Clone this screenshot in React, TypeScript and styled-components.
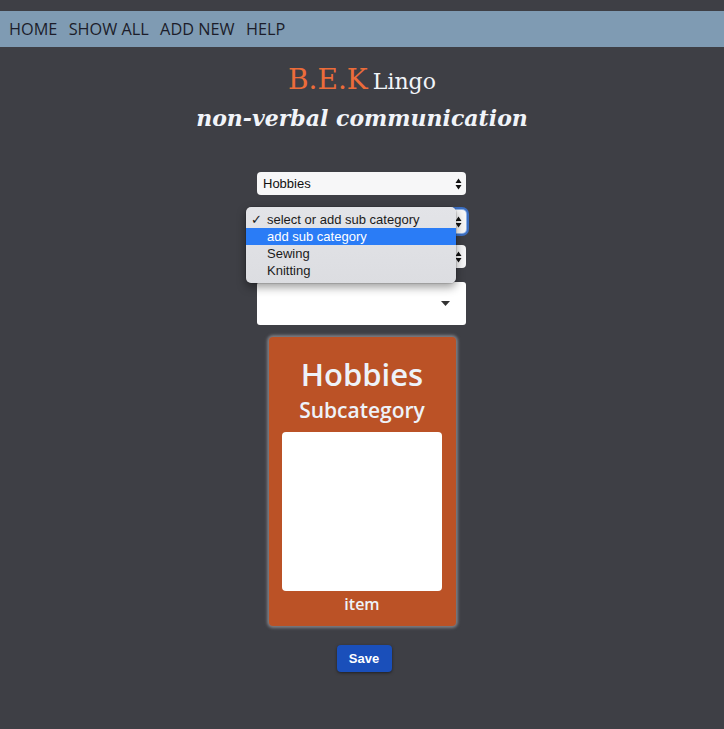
import styled, { createGlobalStyle } from "styled-components";

const GlobalStyle = createGlobalStyle`
  html, body {
    margin: 0;
    padding: 0;
    background: #3e3f45;
  }
  body {
    font-family: "Open Sans", "Liberation Sans", sans-serif;
  }
`;

const Page = styled.div`
  min-height: 729px;
  padding-top: 11px;
  box-sizing: border-box;
`;

const NavBar = styled.nav`
  height: 36px;
  background: #7f9bb3;
  display: flex;
  align-items: center;
  gap: 11.3px;
  padding-left: 9px;
`;

const NavLink = styled.a`
  font-family: "Open Sans", sans-serif;
  font-size: 16.3px;
  color: #1c1d2a;
  text-decoration: none;
`;

const Header = styled.header`
  text-align: center;
  margin-top: 13px;
`;

const Title = styled.h1`
  margin: 0;
  font-family: "DejaVu Serif", "Liberation Serif", serif;
  font-weight: normal;
  line-height: 36px;
  color: #f1f4f9;
`;

const Brand = styled.span`
  font-size: 28px;
  color: #ec6c3a;
  margin-right: 5px;
`;

const Lingo = styled.span`
  font-size: 22px;
`;

const Subtitle = styled.h2`
  margin: 3px 0 0;
  font-family: "DejaVu Serif", "Liberation Serif", serif;
  font-style: italic;
  font-weight: bold;
  font-size: 22px;
  line-height: 30px;
  color: #f1f4f9;
`;

const Form = styled.div`
  width: 209px;
  margin: 39px 0 0 calc(50% - 105px);
  display: flex;
  flex-direction: column;
`;

const Select = styled.div<{ $gap: number; $focused?: boolean }>`
  position: relative;
  height: 23px;
  margin-top: ${(p) => p.$gap}px;
  background: #f7f7f8;
  border-radius: 4px;
  display: flex;
  align-items: center;
  justify-content: space-between;
  padding: 0 4px 0 6px;
  box-sizing: border-box;
  font-family: "Liberation Sans", Arial, sans-serif;
  font-size: 13px;
  color: #111;
  box-shadow: ${(p) =>
    p.$focused ? "0 0 0 1px #8fb2e6, 0 0 0 3px #3c6fc2" : "none"};
`;

const Menu = styled.ul`
  position: absolute;
  left: -11px;
  top: -3px;
  width: 210px;
  margin: 0;
  padding: 4px 0;
  list-style: none;
  background: linear-gradient(#e3e4e8, #dcdde1);
  border-radius: 5px;
  box-shadow: 0 4px 10px rgba(0, 0, 0, 0.4), 0 0 0 0.5px rgba(0, 0, 0, 0.2);
  z-index: 2;
`;

const MenuItem = styled.li<{ $active?: boolean }>`
  position: relative;
  height: 17px;
  line-height: 17px;
  padding-left: 21px;
  font-family: "Liberation Sans", Arial, sans-serif;
  font-size: 13px;
  color: ${(p) => (p.$active ? "#fff" : "#1b1b1b")};
  background: ${(p) => (p.$active ? "#2a7cf6" : "transparent")};
`;

const Check = styled.span`
  position: absolute;
  left: 5px;
  top: 0;
  font-family: "DejaVu Sans", sans-serif;
  font-size: 13px;
  font-weight: bold;
`;

const Box = styled.div`
  height: 43px;
  margin-top: 14px;
  background: #fff;
  border-radius: 3px;
  display: flex;
  align-items: center;
  justify-content: flex-end;
  padding-right: 16px;
`;

const Card = styled.div`
  width: 187px;
  height: 289px;
  margin: 12px auto 0;
  background: #bb5226;
  border-radius: 4px;
  box-shadow: 0 0 3px 2px rgba(160, 160, 165, 0.65);
  display: flex;
  flex-direction: column;
  align-items: center;
  box-sizing: border-box;
  padding-top: 17px;
  color: #eef2f9;
`;

const CardTitle = styled.div`
  font-size: 31px;
  font-weight: 600;
  line-height: 40px;
`;

const CardSub = styled.div`
  font-size: 21px;
  font-weight: 600;
  line-height: 30px;
  margin-top: 1px;
`;

const Picture = styled.div`
  width: 160px;
  height: 159px;
  margin-top: 7px;
  background: #fff;
  border-radius: 4px;
`;

const CardItem = styled.div`
  font-size: 16px;
  font-weight: 600;
  line-height: 24px;
  margin-top: 1px;
`;

const SaveButton = styled.button`
  display: block;
  margin: 19px auto 0;
  width: 55px;
  height: 27px;
  border: none;
  border-radius: 4px;
  background: #1a4fba;
  color: #fff;
  font-family: "Liberation Sans", Arial, sans-serif;
  font-weight: bold;
  font-size: 13px;
  box-shadow: 0 1px 3px rgba(0, 0, 0, 0.5);
  transform: translateX(2px);
`;

const UpDown = () => (
  <svg width="7" height="12" viewBox="0 0 7 12">
    <path d="M3.5 0.5 L6.5 5 L0.5 5 Z M3.5 11.5 L6.5 7 L0.5 7 Z" fill="#111" />
  </svg>
);

const Caret = () => (
  <svg width="9" height="5" viewBox="0 0 9 5">
    <path d="M0 0 L9 0 L4.5 5 Z" fill="#333" />
  </svg>
);

export default function App() {
  return (
    <Page>
      <GlobalStyle />
      <NavBar>
        <NavLink>HOME</NavLink>
        <NavLink>SHOW ALL</NavLink>
        <NavLink>ADD NEW</NavLink>
        <NavLink>HELP</NavLink>
      </NavBar>
      <Header>
        <Title>
          <Brand>B.E.K</Brand>
          <Lingo>Lingo</Lingo>
        </Title>
        <Subtitle>non-verbal communication</Subtitle>
      </Header>
      <Form>
        <Select $gap={0}>
          <span>Hobbies</span>
          <UpDown />
        </Select>
        <Select $gap={15} $focused>
          <span />
          <UpDown />
          <Menu>
            <MenuItem>
              <Check>✓</Check>select or add sub category
            </MenuItem>
            <MenuItem $active>add sub category</MenuItem>
            <MenuItem>Sewing</MenuItem>
            <MenuItem>Knitting</MenuItem>
          </Menu>
        </Select>
        <Select $gap={12}>
          <span />
          <UpDown />
        </Select>
        <Box>
          <Caret />
        </Box>
      </Form>
      <Card>
        <CardTitle>Hobbies</CardTitle>
        <CardSub>Subcategory</CardSub>
        <Picture />
        <CardItem>item</CardItem>
      </Card>
      <SaveButton>Save</SaveButton>
    </Page>
  );
}
